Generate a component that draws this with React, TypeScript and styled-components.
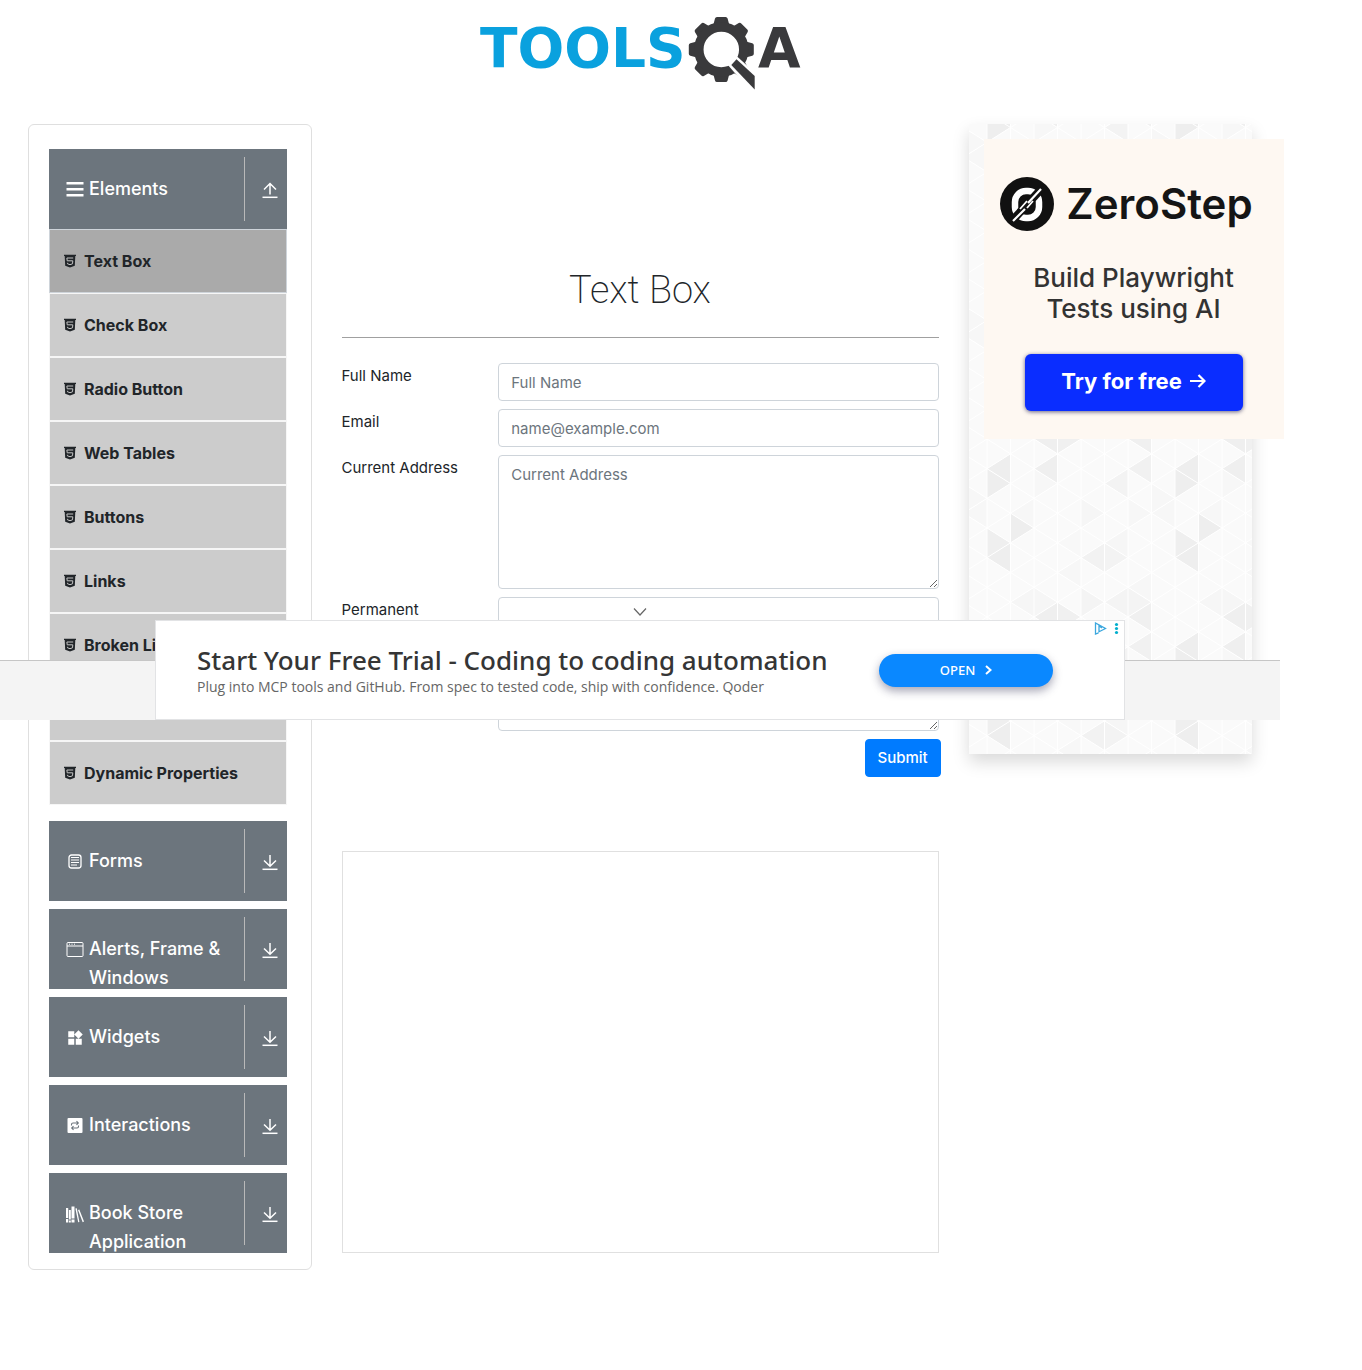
import React from "react";
import styled, { createGlobalStyle } from "styled-components";
import { MdWidgets } from "react-icons/md";

const GlobalStyle = createGlobalStyle`
  *, *::before, *::after { box-sizing: border-box; }
  body {
    margin: 0;
    background: #fff;
    color: #212529;
    font-family: Inter, "Liberation Sans", sans-serif;
    font-size: 15px;
    line-height: 24px;
  }
`;

const Page = styled.div`
  position: relative;
  max-width: 1280px;
`;

const Header = styled.header`
  display: flex;
  justify-content: center;
  padding: 16px 0 34px;

  a, svg { display: block; }
`;

const Columns = styled.div`
  display: flex;
  align-items: flex-start;
  padding: 0 13px 100px;
`;

const Column = styled.div<{ $share: number }>`
  flex: 0 0 ${(p) => p.$share}%;
  min-width: 0;
  padding: 0 15px;
`;

const MenuCard = styled.nav`
  padding: 24px 24px 16px 20px;
  border: 1px solid #dfdfdf;
  border-radius: 6px;
`;

const Group = styled.section`
  & + & { margin-top: 8px; }
`;

const GroupHeader = styled.button`
  display: flex;
  align-items: stretch;
  width: 100%;
  height: 80px;
  padding: 0;
  overflow: hidden;
  border: 0;
  background: #6c757d;
  color: #fff;
  font: inherit;
  font-size: 18px;
  font-weight: 500;
  line-height: 29px;
  text-align: left;
  cursor: pointer;
`;

const GroupIcon = styled.span`
  flex: none;
  width: 18px;
  height: 18px;
  margin: 32px 5px 0 17px;

  svg { display: block; }
`;

const GroupLabel = styled.span`
  flex: 1;
  padding-top: 25px;
`;

const GroupToggle = styled.span`
  display: flex;
  flex: none;
  align-items: center;
  justify-content: center;
  width: 43px;
  margin: 8px 0;
  padding: 2px 0 0 8px;
  border-left: 1px solid #b9b9b9;
`;

const ItemList = styled.ul`
  margin: 0 0 16px;
  padding: 0;
  list-style: none;
`;

const ItemLink = styled.a<{ $active: boolean }>`
  display: flex;
  align-items: center;
  gap: 8px;
  height: 64px;
  padding: 0 14px;
  border: 1px solid ${(p) => (p.$active ? "#ced4da" : "#f6f6f6")};
  background: ${(p) => (p.$active ? "#aaa" : "#ccc")};
  color: #212529;
  font-size: 16px;
  font-weight: 700;
  text-decoration: none;
`;

const Title = styled.h1`
  margin: 142px 0 23px;
  font-family: Roboto, Inter, sans-serif;
  font-size: 38px;
  font-weight: 200;
  line-height: 48px;
  text-align: center;
`;

const Rule = styled.hr`
  height: 1px;
  margin: 0 0 25px;
  border: 0;
  background: #a0a0a0;
`;

const Form = styled.form`
  display: flex;
  flex-direction: column;
  gap: 8px;
  margin: 0 -15px 74px;
`;

const FieldRow = styled.div`
  display: flex;
  align-items: flex-start;
`;

const FieldLabel = styled.label`
  flex: 0 0 25%;
  padding: 1px 15px 0;
`;

const FieldCell = styled.div`
  flex: 1;
  padding: 0 15px;
`;

const TextField = styled.input`
  display: block;
  width: 100%;
  height: 38px;
  padding: 6px 12px;
  border: 1px solid #ced4da;
  border-radius: 4px;
  background: #fff;
  color: #495057;
  font: inherit;

  &::placeholder { color: #6c757d; opacity: 1; }
`;

const AreaField = styled(TextField).attrs({ as: "textarea" })`
  height: 134px;
  padding-top: 7px;
  resize: vertical;
`;

const SubmitRow = styled.div`
  display: flex;
  justify-content: flex-end;
`;

const SubmitCell = styled.div`
  flex: 0 0 104px;
  min-width: 0;
  padding: 0 15px;
`;

const SubmitButton = styled.button`
  padding: 6px 12px;
  border: 1px solid #007bff;
  border-radius: 4px;
  background: #007bff;
  color: #fff;
  font: inherit;
  font-weight: 500;
  cursor: pointer;
`;

const EmptyFrame = styled.div`
  height: 402px;
  border: 1px solid #e0e0e0;
`;

const SidePanel = styled.aside`
  position: relative;
  height: 630px;
  padding: 15px;
  background: #fafafa;
  box-shadow: 0 8px 16px rgba(0, 0, 0, 0.15);
`;

const PanelPattern = styled.svg`
  position: absolute;
  inset: 0;
  width: 100%;
  height: 100%;
`;

const Promo = styled.div`
  position: relative;
  display: flex;
  flex-direction: column;
  align-items: center;
  width: 300px;
  height: 300px;
  padding-top: 37px;
  background: #fef8f2;
`;

const PromoBrand = styled.div`
  display: flex;
  align-items: center;
  gap: 12px;
  height: 56px;
  margin-right: 14px;
  color: #151515;
  font-size: 42px;
  font-weight: 600;
`;

const PromoText = styled.p`
  margin: 30px 0;
  color: #333;
  font-size: 26px;
  font-weight: 500;
  line-height: 31px;
  text-align: center;
`;

const PromoLink = styled.a`
  display: flex;
  align-items: center;
  justify-content: center;
  gap: 8px;
  width: 218px;
  height: 57px;
  padding-bottom: 3px;
  border-radius: 6px;
  background: #0a2dff;
  box-shadow: 0 1px 4px rgba(0, 0, 60, 0.6);
  color: #fff;
  font-size: 22px;
  font-weight: 700;
  text-decoration: none;
`;

const StickyAd = styled.aside`
  position: absolute;
  top: 596px;
  left: 0;
  right: 0;
  display: flex;
  flex-direction: column;
  align-items: center;
`;

const CollapseButton = styled.button`
  display: flex;
  align-items: center;
  justify-content: center;
  width: 40px;
  height: 24px;
  padding: 7px 0 0;
  border: 0;
  background: none;
`;

const AdStrip = styled.div`
  display: flex;
  justify-content: center;
  width: 100%;
  background: linear-gradient(transparent 40px, #c6c6c6 40px, #c6c6c6 41px, #f4f4f4 41px);
`;

const AdBanner = styled.div`
  position: relative;
  display: flex;
  align-items: center;
  justify-content: space-between;
  width: 970px;
  height: 100px;
  padding: 0 71px 0 41px;
  border: 1px solid #e2e3e5;
  background: #fff;
  font-family: "Noto Sans", "Open Sans", sans-serif;
`;

const AdHeadline = styled.div`
  color: #353535;
  font-size: 26px;
  font-weight: 500;
  line-height: 32px;
`;

const AdCopy = styled.div`
  padding-top: 1px;
  color: #666;
  font-family: "Open Sans", "Noto Sans", sans-serif;
  font-size: 14px;
  line-height: 20px;
`;

const AdButton = styled.a`
  display: flex;
  align-items: center;
  justify-content: center;
  gap: 10px;
  width: 174px;
  height: 33px;
  border-radius: 17px;
  background: #0a88ff;
  box-shadow: 0 4px 10px rgba(30, 30, 70, 0.4);
  color: #fff;
  font-size: 13px;
  font-weight: 500;
  text-decoration: none;
`;

const AdChoices = styled.svg`
  position: absolute;
  top: 1px;
  right: 4px;
`;

const Logo = () => (
  <svg width="322" height="74" viewBox="480 16 322 74" role="img" aria-label="TOOLSQA">
    <g fontFamily="DejaVu Sans" fontWeight="700" fontSize="55">
      <text x="481" y="67" fill="#0aa1de">TOOLS</text>
      <text x="759" y="67" fill="#3a3a3c">A</text>
    </g>
    <g fill="#3a3a3c">
      {[0, 45, 90, 135, 180, 225, 270, 315].map((angle) => (
        <path
          key={angle}
          d="M714 26 L716 18.5 Q716.400 17 718 17 H726.600 Q728.200 17 728.600 18.500 L730.600 26 Z"
          transform={`rotate(${angle} 722.3 49.500)`}
        />
      ))}
    </g>
    <circle cx="722.3" cy="49.5" r="22.5" fill="none" stroke="#3a3a3c" strokeWidth="9.500" />
    <path d="M728 64 L737 55.500 L764 80 V96 H756 Z" fill="#fff" />
    <path d="M732.300 65 L737.500 59.300 L755.700 76 V89.500 Z" fill="#3a3a3c" />
  </svg>
);

const ArrowIcon = ({ up }: { up: boolean }) => (
  <svg width="16" height="18" viewBox="0 0 16 18" fill="none" stroke="#fff" strokeWidth="1.5" aria-hidden="true">
    <path d={up ? "M8 13.500V2.500M2 8.500L8 2.500L14 8.500" : "M8 2V13M2 7.500L8 13.200L14 7.500"} />
    <path d="M.5 16.300H15.500" />
  </svg>
);

const HtmlIcon = () => (
  <svg width="12" height="14" viewBox="0 0 12 14" aria-hidden="true">
    <path d="M0 .8H12V2H11.300L10.800 11.800L6 13.500L1.200 11.800L.7 2H0Z" fill="#212529" />
    <path d="M9.200 4H2.900L3.200 6.800H8.800L8.500 9.800L6 10.700L3.500 9.800L3.400 8.800" fill="none" stroke="#c4c4c4" strokeWidth="1" />
  </svg>
);

const BarsIcon = () => (
  <svg width="18" height="18" viewBox="0 0 18 18" fill="#fff" aria-hidden="true">
    <path d="M.5 1H17.500V3.500H.5ZM.5 7H17.500V9.500H.5ZM.5 13H17.500V15.500H.5Z" />
  </svg>
);

const FormIcon = () => (
  <svg width="18" height="18" viewBox="0 0 18 18" fill="none" stroke="#fff" aria-hidden="true">
    <rect x="3" y="2" width="12" height="13" rx="2.5" strokeWidth="1.3" />
    <path d="M5 4.500H13M5 7H13M5 9.500H13M5 12H11" strokeWidth="1" />
  </svg>
);

const WindowIcon = () => (
  <svg width="18" height="18" viewBox="0 0 18 18" fill="none" stroke="#fff" aria-hidden="true">
    <rect x="1" y="1.500" width="16" height="14" rx="1" />
    <path d="M1 5H17M3 3.200H4M5.500 3.200H6.500M8 3.200H9" />
  </svg>
);

const RepeatIcon = () => (
  <svg width="18" height="18" viewBox="0 0 18 18" aria-hidden="true">
    <rect x="1.500" y="1" width="15" height="15" rx="1" fill="#fff" />
    <path d="M5.500 8.500V7.500Q5.500 6 7 6H12M10.500 4.200L12.300 6L10.500 7.800M12.500 8.500V9.500Q12.500 11 11 11H6M7.500 9.200L5.700 11L7.500 12.800" fill="none" stroke="#6c757d" strokeWidth="1.100" />
  </svg>
);

const BooksIcon = () => (
  <svg width="18" height="18" viewBox="0 0 18 18" fill="#fff" aria-hidden="true">
    <path d="M0 3H2.200V13H0ZM0 14H2.200V17.500H0ZM2.900 5H4.800V14.500H2.900ZM2.900 15.500H4.800V17.500H2.900ZM5.500 1.500H8.500V13.500H5.500ZM5.500 14.500H8.500V17.500H5.500ZM9.400 3.500L10.800 3.200L13.400 17L12.200 17.300ZM12 5L13.300 4.500L18 16.600L16.700 17.200Z" />
  </svg>
);

const ZeroStepMark = () => (
  <svg width="54" height="54" viewBox="0 0 54 54" aria-hidden="true">
    <circle cx="27" cy="27" r="27" fill="#111" />
    <rect x="15" y="14" width="24" height="27" rx="11" fill="none" stroke="#fff" strokeWidth="6.500" />
    <path d="M10 46L44 9" stroke="#111" strokeWidth="8" />
    <path d="M13 44L25 32M28 26L41 12" stroke="#fff" strokeWidth="2.200" />
    <path d="M20 32L27 24M27 31L33 24" stroke="#fff" strokeWidth="1.800" />
  </svg>
);

const COL = 23.5;
const HALF = 178 / 12;

type Triangle = ["L" | "R", number, number, string];

const triangles: Triangle[] = [
  ["L", 0, 2, "#eee"], ["R", 0, 3, "#eee"], ["L", 2, 2, "#efefef"], ["L", 2, 0, "#efefef"],
  ["R", 3, 0, "#f0f0f0"], ["L", 6, 2, "#f1f1f1"], ["L", 6, 0, "#f0f0f0"], ["L", 5, 3, "#f3f3f3"],
  ["R", 1, 6, "#eee"], ["R", 0, 7, "#efefef"], ["L", 0, 8, "#eee"], ["L", 4, 8, "#f2f2f2"],
  ["R", 5, 8, "#f3f3f3"], ["L", 5, 7, "#f6f6f6"], ["R", 4, 11, "#f4f4f4"], ["L", 5, 11, "#f4f4f4"],
  ["R", 6, 11, "#f4f4f4"], ["R", 7, 4, "#f7f7f7"], ["L", 1, 5, "#f7f7f7"], ["L", 1, 11, "#f6f6f6"],
  ["R", 2, 11, "#f6f6f6"], ["L", 3, 9, "#f7f7f7"], ["R", 4, 5, "#f6f6f6"], ["L", 7, 5, "#f7f7f7"],
  ["R", 2, 3, "#f7f7f7"], ["L", 3, 7, "#f8f8f8"], ["R", 6, 5, "#f7f7f7"], ["L", 6, 10, "#f7f7f7"],
];

const trianglePoints = (side: string, c: number, u: number) => {
  const edge = side === "L" ? c + 1 : c;
  const apex = side === "L" ? c : c + 1;
  return [[apex, u], [edge, u - 1], [edge, u + 1]].map(([x, y]) => `${x * COL},${y * HALF}`).join(" ");
};

const TrianglePattern = () => (
  <PanelPattern aria-hidden="true">
    <defs>
      <pattern id="triangles" x="18" y="137" width="188" height="178" patternUnits="userSpaceOnUse">
        {triangles.map(([side, c, u, fill]) =>
          [0, 12].map((shift) => (
            <polygon key={`${side}${c}-${u + shift}`} points={trianglePoints(side, c, u + shift)} fill={fill} />
          ))
        )}
        <g stroke="#fff" strokeWidth="1">
          {Array.from({ length: 9 }, (_, i) => (
            <path key={`v${i}`} d={`M${i * COL} 0V178`} />
          ))}
          {Array.from({ length: 11 }, (_, i) => {
            const y = (i * 2 - 8) * HALF;
            return (
              <path key={`d${i}`} d={`M0 ${y}L188 ${y + 8 * HALF}M0 ${y + 8 * HALF}L188 ${y}`} />
            );
          })}
        </g>
      </pattern>
    </defs>
    <rect width="100%" height="100%" fill="url(#triangles)" />
  </PanelPattern>
);

const elementItems = [
  "Text Box", "Check Box", "Radio Button", "Web Tables", "Buttons", "Links",
  "Broken Links - Images", "Upload and Download", "Dynamic Properties",
];

const groups = [
  { label: "Elements", icon: <BarsIcon />, items: elementItems },
  { label: "Forms", icon: <FormIcon />, items: [] },
  { label: "Alerts, Frame & Windows", icon: <WindowIcon />, items: [] },
  { label: "Widgets", icon: <MdWidgets size={18} />, items: [] },
  { label: "Interactions", icon: <RepeatIcon />, items: [] },
  { label: "Book Store Application", icon: <BooksIcon />, items: [] },
];

export default function App() {
  return (
    <>
      <GlobalStyle />
      <Page>
        <Header>
          <a href="#home"><Logo /></a>
        </Header>
        <Columns>
          <Column $share={25}>
            <MenuCard>
              {groups.map(({ label, icon, items }) => (
                <Group key={label}>
                  <GroupHeader type="button" aria-expanded={items.length > 0}>
                    <GroupIcon>{icon}</GroupIcon>
                    <GroupLabel>{label}</GroupLabel>
                    <GroupToggle><ArrowIcon up={items.length > 0} /></GroupToggle>
                  </GroupHeader>
                  {items.length > 0 && (
                    <ItemList>
                      {items.map((item, i) => (
                        <li key={item}>
                          <ItemLink href="#item" $active={i === 0}>
                            <HtmlIcon />
                            {item}
                          </ItemLink>
                        </li>
                      ))}
                    </ItemList>
                  )}
                </Group>
              ))}
            </MenuCard>
          </Column>

          <Column $share={50} as="main">
            <Title>Text Box</Title>
            <Rule />
            <Form>
              <FieldRow>
                <FieldLabel htmlFor="userName">Full Name</FieldLabel>
                <FieldCell><TextField id="userName" type="text" placeholder="Full Name" /></FieldCell>
              </FieldRow>
              <FieldRow>
                <FieldLabel htmlFor="userEmail">Email</FieldLabel>
                <FieldCell><TextField id="userEmail" type="email" placeholder="name@example.com" /></FieldCell>
              </FieldRow>
              <FieldRow>
                <FieldLabel htmlFor="currentAddress">Current Address</FieldLabel>
                <FieldCell><AreaField id="currentAddress" placeholder="Current Address" /></FieldCell>
              </FieldRow>
              <FieldRow>
                <FieldLabel htmlFor="permanentAddress">Permanent Address</FieldLabel>
                <FieldCell><AreaField id="permanentAddress" /></FieldCell>
              </FieldRow>
              <SubmitRow>
                <SubmitCell><SubmitButton type="button">Submit</SubmitButton></SubmitCell>
              </SubmitRow>
            </Form>
            <EmptyFrame />
          </Column>

          <Column $share={25}>
            <SidePanel>
              <TrianglePattern />
              <Promo>
                <PromoBrand><ZeroStepMark />ZeroStep</PromoBrand>
                <PromoText>Build Playwright<br />Tests using AI</PromoText>
                <PromoLink href="#try">
                  Try for free
                  <svg width="16" height="16" viewBox="0 0 16 16" fill="none" stroke="#fff" strokeWidth="2.2" aria-hidden="true">
                    <path d="M0 8H14.500M8.500 2L14.500 8L8.500 14" />
                  </svg>
                </PromoLink>
              </Promo>
            </SidePanel>
          </Column>
        </Columns>

        <StickyAd>
          <CollapseButton type="button" aria-label="Collapse ad">
            <svg width="14" height="8" viewBox="0 0 14 8" fill="none" stroke="#666" strokeWidth="1.2">
              <path d="M1 .5L7 7L13 .5" />
            </svg>
          </CollapseButton>
          <AdStrip>
            <AdBanner>
              <div>
                <AdHeadline>Start Your Free Trial - Coding to coding automation</AdHeadline>
                <AdCopy>Plug into MCP tools and GitHub. From spec to tested code, ship with confidence. Qoder</AdCopy>
              </div>
              <AdButton href="#open">
                OPEN
                <svg width="7" height="10" viewBox="0 0 7 10" fill="none" stroke="#fff" strokeWidth="2" aria-hidden="true">
                  <path d="M1 1L5.500 5L1 9" />
                </svg>
              </AdButton>
              <AdChoices width="26" height="13" viewBox="0 0 26 13" aria-hidden="true">
                <path d="M4.500 10.800L1.500 12V1L11.500 6.500L5 9.800V4L8 6" fill="none" stroke="#3ba7de" strokeWidth="1.300" />
                <g fill="#00aecd">
                  <circle cx="22.500" cy="2.500" r="1.600" />
                  <circle cx="22.500" cy="6.500" r="1.600" />
                  <circle cx="22.500" cy="10.500" r="1.600" />
                </g>
              </AdChoices>
            </AdBanner>
          </AdStrip>
        </StickyAd>
      </Page>
    </>
  );
}
